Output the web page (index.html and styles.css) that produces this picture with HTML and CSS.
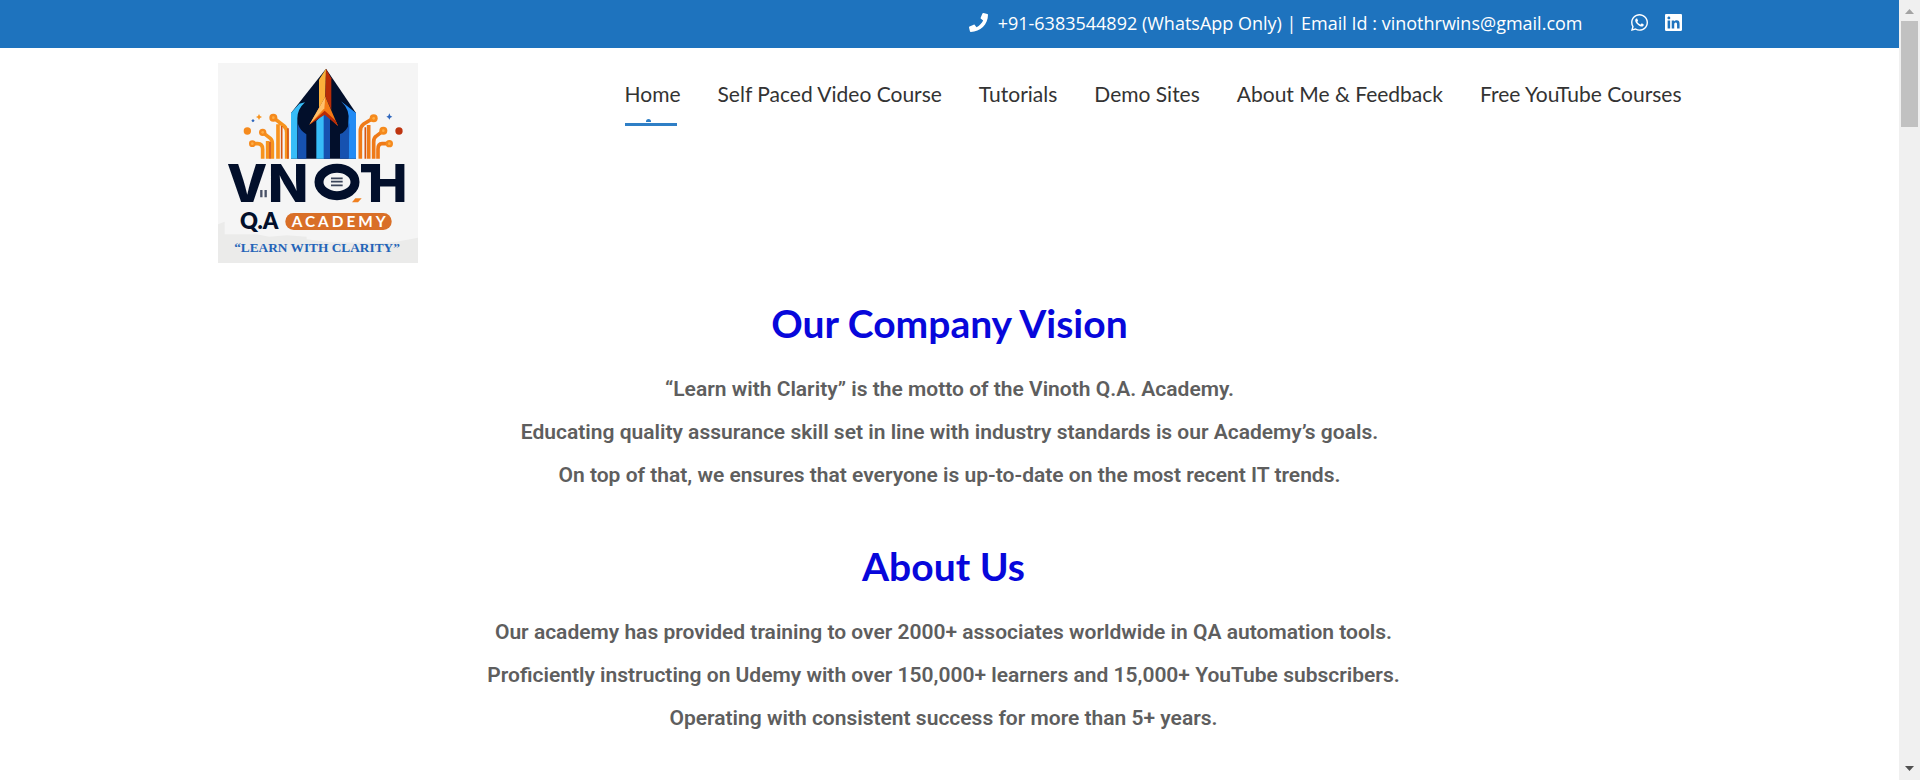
FILE: index.html
```html
<!DOCTYPE html>
<html lang="en">
<head>
<meta charset="utf-8">
<meta name="viewport" content="width=device-width, initial-scale=1">
<title>Vinoth Q.A. Academy</title>
<link rel="stylesheet" href="styles.css">
</head>
<body>
<div class="page">
  <div class="topbar">
    <div class="container topbar-inner">
      <p class="contact">
        <svg class="icon phone" viewBox="0 0 512 512" aria-hidden="true"><path fill="currentColor" d="M493.4 24.6l-104-24c-11.300-2.600-22.900 3.300-27.500 13.900l-48 112c-4.200 9.800-1.400 21.300 6.900 28l60.600 49.600c-36 76.700-98.900 140.500-177.200 177.200l-49.600-60.600c-6.800-8.300-18.200-11.100-28-6.900l-112 48C3.900 366.500-2 378.100.6 389.400l24 104C27.100 504.200 36.700 512 48 512c256.100 0 464-207.500 464-464 0-11.200-7.700-20.900-18.600-23.400z"/></svg>
        <span>+91-6383544892 (WhatsApp Only) | Email Id : vinothrwins@gmail.com</span>
      </p>
      <div class="social">
        <a href="#whatsapp" aria-label="WhatsApp"><svg class="icon" viewBox="0 32 448 448" aria-hidden="true"><path fill="currentColor" d="M380.900 97.100C339 55.100 283.200 32 223.900 32c-122.400 0-222 99.600-222 222 0 39.100 10.200 77.300 29.600 111L0 480l117.700-30.900c32.400 17.700 68.900 27 106.100 27h.1c122.300 0 224.100-99.600 224.100-222 0-59.300-25.200-115-67.100-157zm-157 341.600c-33.200 0-65.700-8.900-94-25.700l-6.700-4-69.800 18.300L72 359.200l-4.400-7c-18.500-29.400-28.200-63.300-28.200-98.200 0-101.700 82.800-184.500 184.600-184.500 49.300 0 95.600 19.200 130.400 54.100 34.800 34.900 56.200 81.200 56.100 130.500 0 101.800-84.900 184.600-186.600 184.600zm101.200-138.200c-5.500-2.800-32.800-16.200-37.900-18-5.100-1.900-8.800-2.800-12.500 2.800-3.700 5.600-14.300 18-17.600 21.800-3.200 3.700-6.500 4.200-12 1.400-32.600-16.300-54-29.100-75.500-66-5.700-9.800 5.700-9.100 16.300-30.300 1.800-3.700.9-6.900-.5-9.700-1.400-2.800-12.500-30.100-17.100-41.200-4.500-10.800-9.100-9.300-12.500-9.500-3.200-.2-6.900-.2-10.600-.2-3.700 0-9.700 1.400-14.800 6.900-5.100 5.600-19.400 19-19.400 46.300 0 27.300 19.900 53.700 22.600 57.400 2.800 3.700 39.100 59.700 94.800 83.800 35.200 15.200 49 16.500 66.600 13.900 10.700-1.600 32.800-13.400 37.400-26.400 4.600-13 4.600-24.100 3.200-26.400-1.300-2.500-5-3.900-10.500-6.600z"/></svg></a>
        <a href="#linkedin" aria-label="LinkedIn"><svg class="icon" viewBox="0 32 448 448" aria-hidden="true"><path fill="currentColor" d="M416 32H31.900C14.300 32 0 46.500 0 64.300v383.400C0 465.500 14.300 480 31.900 480H416c17.600 0 32-14.500 32-32.300V64.300c0-17.800-14.400-32.300-32-32.300zM135.400 416H69V202.200h66.500V416zm-33.200-243c-21.300 0-38.500-17.300-38.500-38.500S80.900 96 102.200 96c21.200 0 38.500 17.300 38.500 38.500 0 21.300-17.200 38.500-38.500 38.500zm282.100 243h-66.400V312c0-24.800-.5-56.700-34.500-56.700-34.600 0-39.900 27-39.900 54.900V416h-66.400V202.200h63.700v29.200h.9c8.900-16.800 30.600-34.500 62.900-34.500 67.200 0 79.700 44.300 79.700 101.900V416z"/></svg></a>
      </div>
    </div>
  </div>

  <header class="container header">
    <a class="brand" href="#home" aria-label="Vinoth Q.A. Academy">
      <svg class="logo" viewBox="24 24 600 600" aria-hidden="true">
        <rect x="24" y="24" width="600" height="600" fill="#f5f5f5"/>
        <path fill="#ebebea" d="M24 508L44 500V538H140L178 545L230 541L290 545V553L360 562L520 564L560 560L624 548V624H24Z"/>
        <!-- arrow tower -->
        <path fill="#020f2b" d="M348 41L438 174V311H243V174Z"/>
        <path fill="#fbb03b" d="M348 41L327 74V160L346 125Z"/>
        <path fill="#b82c07" d="M348 41L364 70V165L346 125Z"/>
        <path fill="#37bdf8" d="M243 174L268 146L285 142Q262 163 262 190V311H243Z"/>
        <path fill="#1652b0" d="M263 205Q270 227 289 238V311H263Z"/>
        <path fill="#238bf4" d="M393 139L438 174V311H415V200Q421 165 393 139Z"/>
        <path fill="#1652b0" d="M418 205Q409 232 390 237V311H416Z"/>
        <path fill="#37bdf8" d="M319 198L342 174V311H319Z"/>
        <path fill="#1652b0" d="M341 174L360 190V311H341Z"/>
        <path fill="#f47a16" d="M346 125L384 213L344 174L298 209Z"/>
        <path fill="#ffc06b" d="M346 125L343 160L298 209Z"/>
        <path fill="#b82c07" d="M344 167L298 209L344 179L384 213L377 197Z"/>
        <!-- circuit branches -->
        <g fill="none" stroke="#f7931e" stroke-width="11">
          <path d="M127 266H143Q158 266 158 283V311M158 232L181 250Q187 255 187 266V311M173 258V311M190 188L222 213Q230 220 230 233V311M204 208V311"/>
          <path stroke="#ef7a18" d="M538 266H516Q504 266 504 283V311M520 227L498 244Q491 249 491 261V311M491 189L461 207Q451 214 451 229V311M476 210V311"/>
        </g>
        <path stroke="#d65413" stroke-width="5" d="M234 220V311M215 213V311M180 260V311M466 217V311"/>
        <g fill="#f58a1d"><circle cx="127" cy="266" r="10"/><circle cx="158" cy="232" r="11"/><circle cx="190" cy="188" r="12"/><circle cx="112" cy="228" r="11"/><circle cx="538" cy="266" r="11"/><circle cx="520" cy="227" r="12"/><circle cx="491" cy="190" r="12"/></g>
        <g fill="#ffae45"><circle cx="127" cy="266" r="4"/><circle cx="158" cy="232" r="4"/><circle cx="190" cy="188" r="4"/><circle cx="538" cy="266" r="4"/><circle cx="520" cy="227" r="4"/><circle cx="491" cy="190" r="4"/></g>
        <circle cx="567" cy="228" r="11" fill="#be3510"/>
        <path fill="#f7931e" d="M147 177L150 183L156 186L150 189L147 195L144 189L138 186L144 183Z"/>
        <path fill="#2e66bd" d="M538 175L541 182L547 185L541 188L538 194L535 188L529 185L535 182ZM129 192L134 197L129 202L124 197Z"/>
        <!-- wordmark -->
        <g class="wordmark" fill="#020f2b">
          <text x="50" y="442">V</text>
          <text x="174" y="442">N</text>
          <text x="474" y="442">H</text>
        </g>
        <rect x="453" y="327" width="46" height="25" fill="#020f2b"/>
        <path stroke="#4a5368" stroke-width="7" d="M154 405V427M167 405V427"/>
        <ellipse cx="381" cy="381" rx="54" ry="41" fill="#f5f5f5" stroke="#020f2b" stroke-width="27"/>
        <path stroke="#3b455a" stroke-width="5" d="M363 370H398M363 380H398M363 391H398"/>
        <path fill="#f08020" d="M436 430H455L444 442H426Z"/>
        <text class="qa" x="90" y="522" fill="#020f2b">Q.A</text>
        <rect x="226" y="474" width="319" height="51" rx="25" fill="#d96f27"/>
        <text class="academy" x="245" y="515" fill="#fff">ACADEMY</text>
        <text class="motto" x="321" y="592" text-anchor="middle" fill="#2464b8">“LEARN WITH CLARITY”</text>
      </svg>
    </a>
    <nav class="nav" aria-label="Main">
      <a class="active" href="#home">Home</a>
      <a href="#courses">Self Paced Video Course</a>
      <a href="#tutorials">Tutorials</a>
      <a href="#demo">Demo Sites</a>
      <a href="#about">About Me &amp; Feedback</a>
      <a href="#youtube">Free YouTube Courses</a>
    </nav>
  </header>

  <main>
    <section class="block">
      <h2>Our Company Vision</h2>
      <p>“Learn with Clarity” is the motto of the Vinoth Q.A. Academy.</p>
      <p>Educating quality assurance skill set in line with industry standards is our Academy’s goals.</p>
      <p>On top of that, we ensures that everyone is up-to-date on the most recent IT trends.</p>
    </section>
    <section class="block block-about">
      <h2>About Us</h2>
      <p>Our academy has provided training to over 2000+ associates worldwide in QA automation tools.</p>
      <p>Proficiently instructing on Udemy with over 150,000+ learners and 15,000+ YouTube subscribers.</p>
      <p>Operating with consistent success for more than 5+ years.</p>
    </section>
  </main>
</div>
<div class="scrollbar" aria-hidden="true">
  <svg class="arrow" viewBox="0 0 9 5"><path fill="#a3a3a3" d="M0 5L4.500 0L9 5Z"/></svg>
  <div class="track"><div class="thumb"></div></div>
  <svg class="arrow" viewBox="0 0 9 5"><path fill="#505050" d="M0 0L4.500 5L9 0Z"/></svg>
</div>
</body>
</html>
```
FILE: styles.css
```css
* { box-sizing: border-box; }

body {
  margin: 0;
  min-height: 100vh;
  display: flex;
  background: #fff;
  color: #5e5e5e;
  font-family: Roboto, sans-serif;
}

h2, p { margin: 0; }
a { color: inherit; text-decoration: none; }

.page { flex: 1; min-width: 0; }

.container {
  width: 100%;
  max-width: 1504px;
  margin: 0 auto;
  padding: 0 20px;
}

.topbar { background: #1e73be; color: #fff; }
.topbar-inner {
  min-height: 48px;
  display: flex;
  align-items: center;
  justify-content: flex-end;
  gap: 48px;
  font: 18px/24px "Open Sans", sans-serif;
  padding-bottom: 3px;
}
.contact { display: flex; align-items: center; gap: 10px; }
.social { display: flex; gap: 17px; }
.social a { display: flex; }
.icon { width: 17px; height: 17px; }
.phone { width: 19px; height: 19px; }

.header {
  display: flex;
  align-items: flex-start;
  justify-content: space-between;
  padding-top: 15px;
}
.brand { display: block; }
.logo { display: block; width: 200px; height: 200px; }
.wordmark { font: 800 158px Inter, sans-serif; }
.qa { font: 800 66px Lato, sans-serif; }
.academy { font: 700 46px Lato, sans-serif; letter-spacing: 9px; }
.motto { font: 700 40px "Liberation Serif", serif; }

.nav {
  display: flex;
  flex-wrap: wrap;
  gap: 37px;
  padding-top: 16px;
  color: #333;
  font: 21px/30px Lato, sans-serif;
}
.nav a { position: relative; padding-bottom: 17px; }
.active::before {
  content: "";
  position: absolute;
  left: 0;
  right: 4px;
  bottom: 0;
  height: 3px;
  background: #2f7fc6;
}
.active::after {
  content: "";
  position: absolute;
  left: 21px;
  bottom: 4px;
  width: 5px;
  height: 3px;
  border-radius: 3px 3px 0 0;
  background: #2f7fc6;
}

.block { padding-top: 35px; text-align: center; }
.block-about { padding-right: 12px; padding-top: 44px; }
.block h2 {
  margin-bottom: 20px;
  color: #0707db;
  font: 700 39px/50px Lato, sans-serif;
}
.block p { font-size: 21px; font-weight: 600; line-height: 43px; }

.scrollbar {
  width: 21px;
  padding: 9px 2px;
  display: flex;
  flex-direction: column;
  align-items: center;
  background: #f0f0f0;
}
.arrow { width: 9px; height: 5px; }
.track { flex: 1; width: 100%; padding: 7px 0; }
.thumb { height: 106px; background: #c1c1c1; }
```
